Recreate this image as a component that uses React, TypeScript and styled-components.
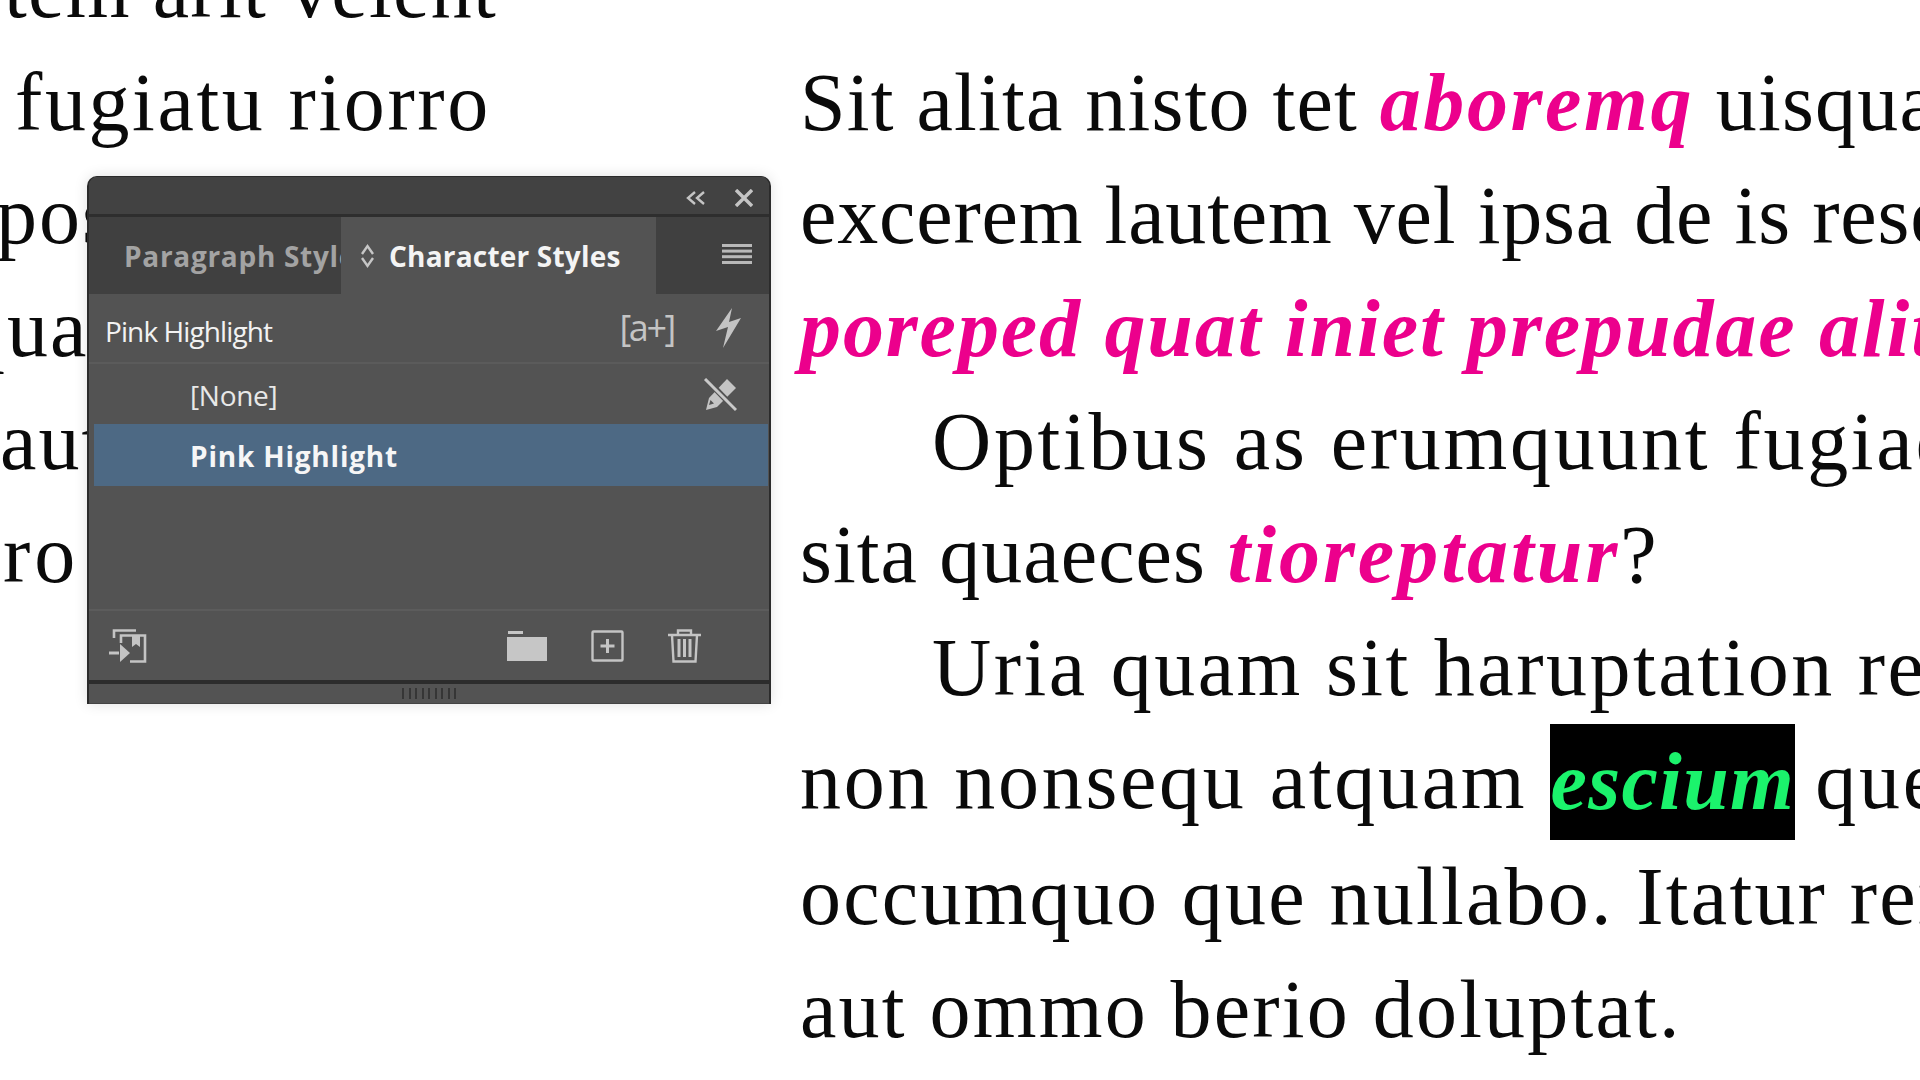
import React from "react";
import styled, { createGlobalStyle } from "styled-components";

const Global = createGlobalStyle`
    html, body {
        margin: 0;
        padding: 0;
        background: #fff;
    }
`;

const Page = styled.div`
    position: relative;
    display: flex;
    width: 1920px;
    height: 1080px;
    overflow: hidden;
    font-family: "Liberation Serif", serif;
    font-size: 82px;
    line-height: 113px;
    color: #0a0a0a;
`;

const LeftColumn = styled.div`
    flex: 0 0 800px;
    margin-top: -67px;
    white-space: nowrap;
`;

const RightColumn = styled.div`
    flex: 1;
    padding-top: 46px;
    white-space: nowrap;
`;

const Line = styled.div<{ $indent?: number; $spacing?: number }>`
    margin-left: ${(p) => p.$indent ?? 0}px;
    letter-spacing: ${(p) => p.$spacing ?? 0}px;
`;

const Pink = styled.span<{ $spacing?: number }>`
    color: #ec008c;
    font-weight: 700;
    font-style: italic;
    letter-spacing: ${(p) => (p.$spacing !== undefined ? `${p.$spacing}px` : "inherit")};
`;

const Overrides = styled.span`
    display: inline-block;
    height: 116px;
    line-height: 116px;
    vertical-align: top;
    margin-right: -3px;
    background: #000;
    color: #1bf36c;
    font-weight: 700;
    font-style: italic;
    letter-spacing: 1.3px;
`;

const Panel = styled.div`
    position: absolute;
    left: 87px;
    top: 176px;
    width: 684px;
    height: 528px;
    display: flex;
    flex-direction: column;
    box-sizing: border-box;
    border: solid #2b2b2b;
    border-width: 1px 2px 0 2px;
    border-radius: 10px 10px 0 0;
    background: #535353;
    box-shadow: 0 0 14px rgba(0, 0, 0, 0.12);
    font-family: "Open Sans", sans-serif;
    line-height: normal;
    overflow: hidden;
`;

const TitleBar = styled.div`
    flex: 0 0 40px;
    display: flex;
    align-items: center;
    justify-content: flex-end;
    gap: 29px;
    padding: 4px 16px 0 0;
    box-sizing: border-box;
    background: #424242;
    border-bottom: 3px solid #2e2e2e;
`;

const TabBar = styled.div`
    flex: 0 0 77px;
    display: flex;
    align-items: stretch;
    background: #404040;
`;

const Tab = styled.div<{ $active?: boolean }>`
    display: flex;
    align-items: center;
    box-sizing: border-box;
    overflow: hidden;
    white-space: nowrap;
    font-size: 28px;
    font-weight: 700;
    letter-spacing: ${(p) => (p.$active ? 0.2 : 0.7)}px;
    flex: 0 0 ${(p) => (p.$active ? 315 : 252)}px;
    padding-left: ${(p) => (p.$active ? 19 : 35)}px;
    gap: 14px;
    color: ${(p) => (p.$active ? "#f4f4f4" : "#a3a3a3")};
    background: ${(p) => (p.$active ? "#535353" : "transparent")};
`;

const MenuSlot = styled.div`
    flex: 1;
    display: flex;
    align-items: center;
    justify-content: flex-end;
    padding-right: 17px;
    padding-bottom: 4px;
`;

const CurrentRow = styled.div`
    flex: 0 0 70px;
    display: flex;
    align-items: center;
    padding: 0 27px 0 16px;
    box-sizing: border-box;
    border-bottom: 2px solid #5b5b5b;
    color: #f2f2f2;
    font-size: 28px;
    letter-spacing: -0.9px;
`;

const CurrentName = styled.span`
    flex: 1;
    padding-top: 6px;
`;

const ApplyMark = styled.span`
    margin-right: 42px;
    font-size: 36px;
    color: #c4c4c4;
    letter-spacing: -2.4px;
    line-height: 1;
`;

const StyleRow = styled.div<{ $selected?: boolean }>`
    display: flex;
    align-items: center;
    justify-content: space-between;
    height: ${(p) => (p.$selected ? 62 : 60)}px;
    margin: 0 1px 0 5px;
    padding: ${(p) => (p.$selected ? 2 : 1)}px 31px 0 96px;
    box-sizing: border-box;
    font-size: 28px;
    letter-spacing: ${(p) => (p.$selected ? 0.8 : -0.3)}px;
    font-weight: ${(p) => (p.$selected ? 700 : 400)};
    color: ${(p) => (p.$selected ? "#f6f6f6" : "#e8e8e8")};
    background: ${(p) => (p.$selected ? "#4d6984" : "transparent")};
`;

const Spacer = styled.div`
    flex: 1;
    border-bottom: 2px solid #5c5c5c;
`;

const Footer = styled.div`
    flex: 0 0 69px;
    display: flex;
    align-items: center;
    padding: 0 68px 0 20px;
    gap: 44px;
`;

const FooterLeft = styled.div`
    margin-right: auto;
    display: flex;
`;

const Grip = styled.div`
    flex: 0 0 24px;
    box-sizing: border-box;
    display: flex;
    align-items: center;
    justify-content: center;
    border-top: 4px solid #2c2c2c;
    border-bottom: 1px solid #444;
    background: #535353;
`;

const GripBars = styled.div`
    display: flex;
    gap: 4.5px;
`;

const GripBar = styled.i`
    display: block;
    width: 2px;
    height: 11px;
    background: #363636;
`;

const CollapseIcon = () => (
    <svg width="20" height="14" viewBox="0 0 20 14" fill="none" stroke="#c4c4c4" strokeWidth="2.4">
        <path d="M9 1 2 7l7 6M18 1l-7 6 7 6" />
    </svg>
);

const CloseIcon = () => (
    <svg width="18" height="18" viewBox="0 0 18 18" fill="none" stroke="#c4c4c4" strokeWidth="3.4">
        <path d="M1 1l16 16M17 1 1 17" />
    </svg>
);

const MenuIcon = () => (
    <svg width="30" height="20" viewBox="0 0 30 20" fill="#b8b8b8">
        <rect y="0" width="30" height="3" />
        <rect y="5.6" width="30" height="3" />
        <rect y="11.2" width="30" height="3" />
        <rect y="17" width="30" height="3" />
    </svg>
);

const UpDownIcon = () => (
    <svg width="15" height="26" viewBox="0 0 15 26" fill="none" stroke="#c6c6c6" strokeWidth="2.4">
        <path d="M2 11l5.5-8L13 11M2 15l5.5 8L13 15" />
    </svg>
);

const BoltIcon = () => (
    <svg width="26" height="40" viewBox="0 0 26 40" fill="#c4c4c4">
        <path d="M16 0 0 23l12-4-5 21L25 10l-12 4z" />
    </svg>
);

const NoOverrideIcon = () => (
    <svg width="34" height="34" viewBox="0 0 34 34">
        <path d="M24 1l9 9-19 19-11 3 3-12z" fill="#c4c4c4" />
        <path d="M6 27l1.5-5 3.5 3.5z" fill="#535353" />
        <path d="M3 1l30 31" stroke="#535353" strokeWidth="6" />
        <path d="M2 1l31 31" stroke="#c9c9c9" strokeWidth="3" />
    </svg>
);

const LoadIcon = () => (
    <svg width="38" height="34" viewBox="0 0 38 34" fill="none" stroke="#c4c4c4" strokeWidth="2.6">
        <path d="M5 9V1.5h22" />
        <path d="M12 14V6.5h24v26H21" />
        <path d="M23 6v12l4-3 4 3V6z" fill="#c4c4c4" stroke="none" />
        <path d="M0 24h10" strokeWidth="3" />
        <path d="M11 15l10 9-10 9z" fill="#c4c4c4" stroke="none" />
    </svg>
);

const FolderIcon = () => (
    <svg width="40" height="30" viewBox="0 0 40 30" fill="#c6c6c6">
        <path d="M1 0h15v3H1zM0 6h40v24H0z" />
    </svg>
);

const NewIcon = () => (
    <svg width="33" height="32" viewBox="0 0 33 32" fill="none" stroke="#c4c4c4" strokeWidth="2.4">
        <rect x="1.5" y="1.5" width="30" height="29" rx="1" />
        <path d="M16.5 9v14M9.5 16h14" strokeWidth="3" />
    </svg>
);

const TrashIcon = () => (
    <svg width="33" height="34" viewBox="0 0 33 34" fill="none" stroke="#c4c4c4" strokeWidth="2.4">
        <path d="M0 6h33M10 5V1.5h13V5" />
        <path d="M4 6l1.5 26.5h22L29 6" />
        <path d="M11 10v18M16.5 10v18M22 10v18" strokeWidth="3" />
    </svg>
);

const App = () => (
    <Page>
        <Global />
        <LeftColumn>
            <Line $indent={4} $spacing={1.3}>tem arit velent</Line>
            <Line $indent={15} $spacing={2.6}>fugiatu riorro</Line>
            <Line $indent={-4} $spacing={2}>pos</Line>
            <Line $indent={-36} $spacing={2}>qua</Line>
            <Line $spacing={2}>aut</Line>
            <Line $indent={3} $spacing={4}>ro</Line>
        </LeftColumn>
        <RightColumn>
            <Line $spacing={1.2}>
                Sit alita nisto tet <Pink $spacing={2.6}>aboremq</Pink> uisquam
            </Line>
            <Line $spacing={0.8}>excerem lautem vel ipsa de is reseque</Line>
            <Line $spacing={1.9}>
                <Pink>poreped quat iniet prepudae alit</Pink>
            </Line>
            <Line $indent={132} $spacing={2.7}>Optibus as erumquunt fugiae</Line>
            <Line $spacing={1}>
                sita quaeces <Pink $spacing={3}>tioreptatur</Pink>?
            </Line>
            <Line $indent={132} $spacing={2.5}>Uria quam sit haruptation rerum</Line>
            <Line $spacing={2.7}>
                non nonsequ atquam <Overrides>escium</Overrides> que
            </Line>
            <Line $spacing={2.2}>occumquo que nullabo. Itatur rerum</Line>
            <Line $spacing={2.2}>aut ommo berio doluptat.</Line>
        </RightColumn>
        <Panel>
            <TitleBar>
                <CollapseIcon />
                <CloseIcon />
            </TitleBar>
            <TabBar>
                <Tab>Paragraph Styles</Tab>
                <Tab $active>
                    <UpDownIcon />
                    Character Styles
                </Tab>
                <MenuSlot>
                    <MenuIcon />
                </MenuSlot>
            </TabBar>
            <CurrentRow>
                <CurrentName>Pink Highlight</CurrentName>
                <ApplyMark>[a+]</ApplyMark>
                <BoltIcon />
            </CurrentRow>
            <StyleRow>
                [None]
                <NoOverrideIcon />
            </StyleRow>
            <StyleRow $selected>Pink Highlight</StyleRow>
            <Spacer />
            <Footer>
                <FooterLeft>
                    <LoadIcon />
                </FooterLeft>
                <FolderIcon />
                <NewIcon />
                <TrashIcon />
            </Footer>
            <Grip>
                <GripBars>
                    {Array.from({ length: 9 }, (_, i) => (
                        <GripBar key={i} />
                    ))}
                </GripBars>
            </Grip>
        </Panel>
    </Page>
);

export default App;
